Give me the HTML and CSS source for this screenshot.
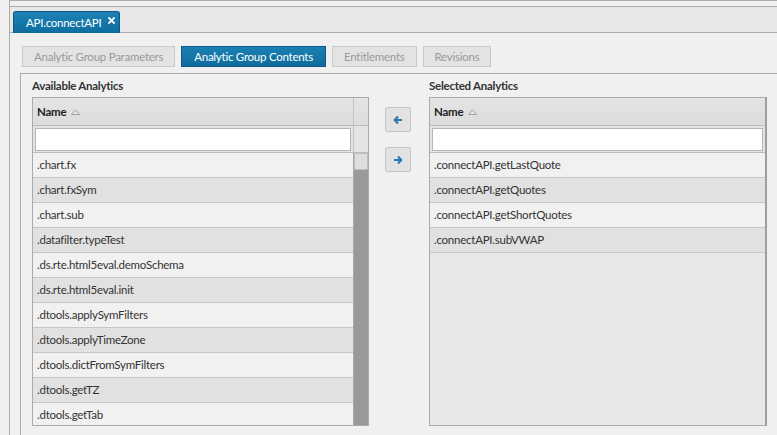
FILE: index.html
```html
<!DOCTYPE html>
<html>
<head>
<meta charset="utf-8">
<link rel="stylesheet" href="styles.css">
</head>
<body>
<div class="frame">
  <div class="tabbar">
    <div class="tab">
      <span class="tab-title">API.connectAPI</span>
      <svg class="tab-close" width="7" height="7" viewBox="0 0 7 7"><path d="M1 1 L6 6 M6 1 L1 6" stroke="#fff" stroke-width="1.8" stroke-linecap="square"/></svg>
    </div>
  </div>
  <div class="content">
    <div class="btnrow">
      <div class="btn">Analytic Group Parameters</div>
      <div class="btn active">Analytic Group Contents</div>
      <div class="btn">Entitlements</div>
      <div class="btn">Revisions</div>
    </div>
    <div class="panel">
      <div class="col col-left">
        <div class="label">Available Analytics</div>
        <div class="grid grid-left">
          <div class="hrow">
            <div class="hcell">Name <svg class="sort" width="9" height="6" viewBox="0 0 9 6"><path d="M0.5 5.5 L4.5 0.8 L8.5 5.5 Z" fill="#e8e8e8" stroke="#9a9a9a" stroke-width="0.9"/></svg></div>
            <div class="hside"></div>
          </div>
          <div class="frow">
            <div class="fcell"><div class="input"></div></div>
            <div class="hside"></div>
          </div>
          <div class="body">
            <div class="rows">
              <div class="row">.chart.fx</div>
              <div class="row">.chart.fxSym</div>
              <div class="row">.chart.sub</div>
              <div class="row">.datafilter.typeTest</div>
              <div class="row">.ds.rte.html5eval.demoSchema</div>
              <div class="row">.ds.rte.html5eval.init</div>
              <div class="row">.dtools.applySymFilters</div>
              <div class="row">.dtools.applyTimeZone</div>
              <div class="row">.dtools.dictFromSymFilters</div>
              <div class="row">.dtools.getTZ</div>
              <div class="row">.dtools.getTab</div>
            </div>
            <div class="scroll"><div class="thumb"></div></div>
          </div>
        </div>
      </div>
      <div class="mid">
        <div class="abtn"><svg width="10" height="10" viewBox="0 0 10 10"><path d="M5 1.5 L1.8 5 L5 8.5 M2 5 L9 5" fill="none" stroke="#2a7ab3" stroke-width="2.2"/></svg></div>
        <div class="abtn"><svg width="10" height="10" viewBox="0 0 10 10"><path d="M5 1.5 L8.2 5 L5 8.5 M8 5 L1 5" fill="none" stroke="#2a7ab3" stroke-width="2.2"/></svg></div>
      </div>
      <div class="col col-right">
        <div class="label">Selected Analytics</div>
        <div class="grid grid-right">
          <div class="hrow">
            <div class="hcell">Name <svg class="sort" width="9" height="6" viewBox="0 0 9 6"><path d="M0.5 5.5 L4.5 0.8 L8.5 5.5 Z" fill="#e8e8e8" stroke="#9a9a9a" stroke-width="0.9"/></svg></div>
          </div>
          <div class="frow">
            <div class="fcell"><div class="input"></div></div>
          </div>
          <div class="body">
            <div class="rows">
              <div class="row">.connectAPI.getLastQuote</div>
              <div class="row">.connectAPI.getQuotes</div>
              <div class="row">.connectAPI.getShortQuotes</div>
              <div class="row">.connectAPI.subVWAP</div>
            </div>
          </div>
        </div>
      </div>
    </div>
  </div>
</div>
</body>
</html>
```

FILE: styles.css
```css
* { box-sizing: border-box; }
html, body {
  margin: 0;
  padding: 0;
  background: #f0f0f0;
  font-family: Lato, "Open Sans", sans-serif;
  font-size: 11.5px;
  letter-spacing: -0.25px;
  color: #333;
  height: 435px;
  overflow: hidden;
}
.frame {
  margin-left: 9px;
  height: 435px;
  border-left: 1px solid #ababab;
  border-top: 1px solid #ababab;
  padding-top: 5px;
}
.tabbar {
  height: 27px;
  background: #e7e7e7;
  border-top: 1px solid #ababab;
  border-bottom: 1px solid #ababab;
  display: flex;
  align-items: flex-end;
  padding-left: 3px;
}
.tab {
  height: 22px;
  margin-bottom: -1px;
  background: linear-gradient(#1c82b6, #0e6d9e);
  border: 1px solid #0b5a86;
  border-bottom: none;
  border-radius: 3px 3px 0 0;
  color: #fff;
  display: flex;
  align-items: center;
  padding: 0 4px 1px 12px;
  font-size: 11.5px;
  white-space: nowrap;
}
.tab-title { margin-right: 7px; }
.tab-close { margin-top: -3px; flex: none; }
.content {
  padding-left: 10px;
  padding-top: 13px;
}
.btnrow {
  display: flex;
  gap: 6px;
  padding-left: 2px;
  height: 21px;
}
.btn {
  height: 21px;
  padding: 0 11px;
  background: #e3e3e3;
  border: 1px solid #c9c9c9;
  color: #9a9a9a;
  display: flex;
  align-items: center;
  white-space: nowrap;
}
.btn.active {
  background: linear-gradient(#1b80b3, #0f6c9c);
  border-color: #0c5a85;
  color: #fff;
  padding: 0 12px;
}
.panel {
  margin-top: 6px;
  border-top: 1px solid #ababab;
  border-left: 1px solid #ababab;
  height: 362px;
  padding-left: 11px;
  display: flex;
}
.label {
  height: 23px;
  padding-top: 4px;
  line-height: 16px;
  font-weight: bold;
  color: #333;
}
.col-left { width: 337px; }
.col-right { width: 338px; }
.grid {
  border: 1px solid #ababab;
  height: 329px;
  background: #e8e8e8;
  display: flex;
  flex-direction: column;
  overflow: hidden;
}
.grid-right { border-right: 2px solid #9e9e9e; }
.hrow {
  height: 28px;
  flex: none;
  display: flex;
  background: linear-gradient(#e4e4e4, #dcdcdc);
  border-bottom: 1px solid #bdbdbd;
}
.hcell {
  flex: 1;
  font-weight: bold;
  display: flex;
  align-items: center;
  padding-left: 4px;
  color: #222;
}
.sort { margin-left: 5px; margin-top: 1px; }
.hside {
  width: 15px;
  border-left: 1px solid #c2c2c2;
}
.frow {
  height: 27px;
  flex: none;
  display: flex;
  background: #e4e4e4;
  border-bottom: 1px solid #bdbdbd;
}
.fcell {
  flex: 1;
  padding: 2px 2px 1px 2px;
}
.input {
  height: 23px;
  background: #fff;
  border: 1px solid #b5b5b5;
}
.body {
  flex: 1;
  display: flex;
  overflow: hidden;
}
.rows { flex: 1; }
.row {
  height: 25px;
  border-bottom: 1px solid #c6c6c6;
  padding-left: 4px;
  padding-bottom: 1px;
  display: flex;
  align-items: center;
  background: #f1f1f1;
  color: #333;
  white-space: nowrap;
}
.row:nth-child(even) { background: #e1e1e1; }
.scroll {
  width: 15px;
  background: #999;
  border-left: 1px solid #a8a8a8;
}
.thumb {
  height: 17px;
  background: #dedede;
  border: 1px solid #bcbcbc;
}
.mid {
  width: 60px;
  padding: 33px 0 0 16px;
  display: flex;
  flex-direction: column;
  gap: 15px;
}
.abtn {
  width: 26px;
  height: 25px;
  background: #e2e2e2;
  border: 1px solid #c4c4c4;
  border-radius: 2px;
  display: flex;
  align-items: center;
  justify-content: center;
}
```
